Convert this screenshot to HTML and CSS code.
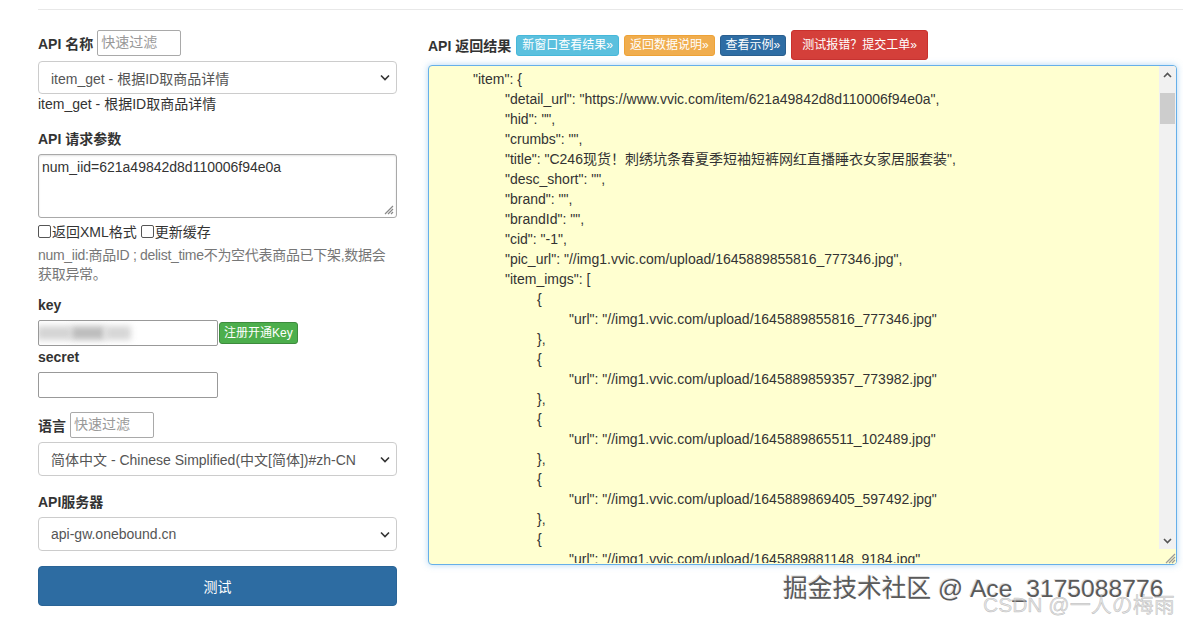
FILE: index.html
```html
<!DOCTYPE html>
<html lang="zh-CN">
<head>
<meta charset="utf-8">
<title>API 测试</title>
<link rel="stylesheet" href="styles.css">
</head>
<body>
<div class="page">
  <div class="rule"></div>
  <div class="main">
    <div class="left">
      <div class="inline-row first">
        <span class="label">API 名称</span>
        <span class="filter">快速过滤</span>
      </div>
      <div class="select s-api"><span>item_get - 根据ID取商品详情</span><svg class="chev" width="10" height="7" viewBox="0 0 10 7"><polyline points="1,1.5 5,5.5 9,1.5" fill="none" stroke="#333" stroke-width="1.6"/></svg></div>
      <div class="api-desc">item_get - 根据ID取商品详情</div>
      <div class="label block l-params">API 请求参数</div>
      <div class="params">
        <span>num_iid=621a49842d8d110006f94e0a</span>
        <svg class="grip" width="12" height="12" viewBox="0 0 12 12"><path d="M11 3 L3 11 M11 6 L6 11 M11 9 L9 11" stroke="#888" stroke-width="1.2" fill="none"/></svg>
      </div>
      <div class="checks">
        <span class="cb"></span><span>返回XML格式</span>
        <span class="cb cb2"></span><span>更新缓存</span>
      </div>
      <div class="help">num_iid:商品ID ; delist_time不为空代表商品已下架,数据会获取异常。</div>
      <div class="label block l-key">key</div>
      <div class="key-row">
        <div class="input key-input">
          <span class="blur b1"></span><span class="blur b2"></span><span class="blur b3"></span>
        </div>
        <span class="btn-green">注册开通Key</span>
      </div>
      <div class="label block l-secret">secret</div>
      <div class="input secret-input"></div>
      <div class="inline-row lang-row">
        <span class="label">语言</span>
        <span class="filter">快速过滤</span>
      </div>
      <div class="select s-lang"><span>简体中文 - Chinese Simplified(中文[简体])#zh-CN</span><svg class="chev" width="10" height="7" viewBox="0 0 10 7"><polyline points="1,1.5 5,5.5 9,1.5" fill="none" stroke="#333" stroke-width="1.6"/></svg></div>
      <div class="label block l-server">API服务器</div>
      <div class="select s-server"><span>api-gw.onebound.cn</span><svg class="chev" width="10" height="7" viewBox="0 0 10 7"><polyline points="1,1.5 5,5.5 9,1.5" fill="none" stroke="#333" stroke-width="1.6"/></svg></div>
      <div class="btn-test">测试</div>
    </div>
    <div class="right">
      <div class="head-row">
        <span class="label">API 返回结果</span>
        <span class="bx bx-info">新窗口查看结果»</span>
        <span class="bx bx-warn">返回数据说明»</span>
        <span class="bx bx-primary">查看示例»</span>
        <span class="bsm bx-danger">测试报错？提交工单»</span>
      </div>
      <div class="result">
        <div class="code">
          <div class="ln i1">"item": {</div>
          <div class="ln i2">"detail_url": "https://www.vvic.com/item/621a49842d8d110006f94e0a",</div>
          <div class="ln i2">"hid": "",</div>
          <div class="ln i2">"crumbs": "",</div>
          <div class="ln i2">"title": "C246现货！刺绣坑条春夏季短袖短裤网红直播睡衣女家居服套装",</div>
          <div class="ln i2">"desc_short": "",</div>
          <div class="ln i2">"brand": "",</div>
          <div class="ln i2">"brandId": "",</div>
          <div class="ln i2">"cid": "-1",</div>
          <div class="ln i2">"pic_url": "//img1.vvic.com/upload/1645889855816_777346.jpg",</div>
          <div class="ln i2">"item_imgs": [</div>
          <div class="ln i3">{</div>
          <div class="ln i4">"url": "//img1.vvic.com/upload/1645889855816_777346.jpg"</div>
          <div class="ln i3">},</div>
          <div class="ln i3">{</div>
          <div class="ln i4">"url": "//img1.vvic.com/upload/1645889859357_773982.jpg"</div>
          <div class="ln i3">},</div>
          <div class="ln i3">{</div>
          <div class="ln i4">"url": "//img1.vvic.com/upload/1645889865511_102489.jpg"</div>
          <div class="ln i3">},</div>
          <div class="ln i3">{</div>
          <div class="ln i4">"url": "//img1.vvic.com/upload/1645889869405_597492.jpg"</div>
          <div class="ln i3">},</div>
          <div class="ln i3">{</div>
          <div class="ln i4 last">"url": "//img1.vvic.com/upload/1645889881148_9184.jpg"</div>
        </div>
        <div class="scrollbar">
          <div class="sb-btn"><svg width="9" height="6" viewBox="0 0 9 6"><polyline points="1,5 4.5,1.5 8,5" fill="none" stroke="#555" stroke-width="1.6"/></svg></div>
          <div class="sb-track"><div class="sb-thumb"></div></div>
          <div class="sb-btn"><svg width="9" height="6" viewBox="0 0 9 6"><polyline points="1,1 4.5,4.5 8,1" fill="none" stroke="#555" stroke-width="1.6"/></svg></div>
          <div class="sb-corner"><svg width="13" height="13" viewBox="0 0 13 13"><path d="M12 3 L3 12 M12 6 L6 12 M12 9 L9 12" stroke="#999" stroke-width="1.2" fill="none"/></svg></div>
        </div>
      </div>
    </div>
  </div>
  <div class="wm wm-juejin">掘金技术社区 @ Ace_3175088776</div>
  <div class="wm wm-csdn">CSDN @一人の梅雨</div>
</div>
</body>
</html>
```

FILE: styles.css
```css
* { box-sizing: border-box; }
html, body { margin: 0; padding: 0; background: #fff; }
body {
  font-family: "Liberation Sans", "Noto Sans CJK SC", sans-serif;
  font-size: 14px;
  color: #333;
  width: 1183px;
  height: 620px;
  overflow: hidden;
}
.page { position: relative; padding: 9px 6px 0 38px; height: 620px; }
.rule { border-top: 1px solid #e8e8e8; margin-right: -6px; }
.main { display: flex; gap: 31px; }
.left { width: 359px; display: flex; flex-direction: column; }
.right { flex: 1; display: flex; flex-direction: column; }

.label { font-weight: bold; color: #333; font-size: 14px; }
.label.block { height: 20px; line-height: 20px; }

.inline-row { display: flex; align-items: center; gap: 4px; height: 26px; }
.inline-row.first { margin-top: 20px; }
.filter {
  display: inline-block; width: 84px; height: 26px; line-height: 22px;
  border: 1px solid #a9a9a9; border-radius: 2px; padding: 0 3px;
  color: #999; font-size: 14px;
}

.select {
  height: 33px; border: 1px solid #ccc; border-radius: 4px;
  display: flex; align-items: center; justify-content: space-between;
  padding: 0 6px 0 12px; color: #555; font-size: 14px; background: #fff;
}
.s-api { margin-top: 5px; }
.api-desc { margin-top: 0; line-height: 20px; height: 20px; color: #333; }
.l-params { margin-top: 15px; }

.params {
  margin-top: 5px; height: 64px; border: 1px solid #a9a9a9; border-radius: 3px;
  box-shadow: inset 0 1px 2px rgba(0,0,0,.12);
  padding: 3px 3px; line-height: 18px; color: #333; position: relative;
}
.grip { position: absolute; right: 2px; bottom: 2px; }

.checks { margin-top: 3px; height: 20px; display: flex; align-items: center; color: #333; }
.cb { width: 13px; height: 13px; border: 1px solid #555; border-radius: 2px; margin-right: 1px; background: #fff; }
.cb2 { margin-left: 4px; }

.help { margin-top: 5px; line-height: 19px; color: #777; font-size: 14px; letter-spacing: -0.3px; }
.l-key { margin-top: 11px; }
.key-row { margin-top: 5px; display: flex; align-items: center; }
.input { height: 26px; border: 1px solid #999; border-radius: 2px; background: #fff; }
.key-input { width: 180px; position: relative; overflow: hidden; display: flex; align-items: center; padding-left: 0; }
.blur { display: inline-block; height: 14px; background: #c9c9c9; filter: blur(3px); }
.b1 { width: 34px; margin-left: -2px; background: #d4d4d4; }
.b2 { width: 34px; background: #bdbdbd; }
.b3 { width: 26px; background: #d6d6d6; }
.btn-green {
  display: inline-block; height: 22px; line-height: 20px; padding: 0 4px;
  background: #4cae4c; border: 1px solid #3d8b3d; border-radius: 3px;
  color: #fff; font-size: 12px; margin-left: 1px;
}
.l-secret { margin-top: 1px; }
.secret-input { width: 180px; margin-top: 5px; }
.lang-row { margin-top: 14px; }
.s-lang { margin-top: 4px; height: 34px; }
.l-server { margin-top: 16px; }
.s-server { margin-top: 5px; height: 34px; }
.btn-test {
  margin-top: 15px; height: 40px; border-radius: 4px;
  background: #2d6ca2; border: 1px solid #2a6496; color: #fff;
  display: flex; align-items: center; justify-content: center; font-size: 14px;
}

.head-row { margin-top: 20px; height: 30px; display: flex; align-items: center; gap: 5px; }
.head-row .label { margin-right: 0; }
.bx {
  display: inline-block; height: 21px; line-height: 17px; padding: 1px 5px;
  font-size: 12px; color: #fff; border: 1px solid transparent; border-radius: 3px;
}
.bsm {
  display: inline-block; height: 30px; line-height: 18px; padding: 5px 10px;
  font-size: 12px; color: #fff; border: 1px solid transparent; border-radius: 3px;
}
.bx-info { background: #5bc0de; border-color: #46b8da; }
.bx-warn { background: #f0ad4e; border-color: #eea236; }
.bx-primary { background: #2e6da4; border-color: #2a5f8f; }
.bx-danger { background: #d43f3a; border-color: #c9302c; }

.result {
  margin-top: 5px; height: 500px; background: #ffffd0;
  border: 1px solid #66afe9; border-radius: 4px;
  box-shadow: 0 0 6px rgba(102,175,233,.5);
  display: flex; overflow: hidden;
}
.code { flex: 1; padding: 3px 0 0 12px; line-height: 20px; color: #333; font-size: 14px; overflow: hidden; white-space: nowrap; }
.ln { height: 20px; }
.ln.last { height: 14px; overflow: hidden; }
.i1 { padding-left: 32px; }
.i2 { padding-left: 64px; }
.i3 { padding-left: 96px; }
.i4 { padding-left: 128px; }

.scrollbar { width: 17px; display: flex; flex-direction: column; background: #f1f1f1; }
.sb-btn { height: 17px; display: flex; align-items: center; justify-content: center; }
.sb-track { flex: 1; padding-top: 10px; }
.sb-thumb { height: 31px; background: #cdcdcd; margin: 0 1px; }
.sb-corner { height: 15px; background: #ffffd0; display: flex; align-items: flex-end; justify-content: flex-end; }

.wm { position: absolute; white-space: nowrap; }
.wm-juejin {
  left: 783px; top: 568px; font-size: 24.7px; color: #5a5a5a;
  text-shadow: 1px 1px 0 #fff, -1px -1px 0 #ddd;
}
.wm-csdn {
  left: 983px; top: 588px; font-size: 21px; color: rgba(200,200,200,.5);
  -webkit-text-stroke: 0.5px rgba(130,130,130,.45);
}
```
